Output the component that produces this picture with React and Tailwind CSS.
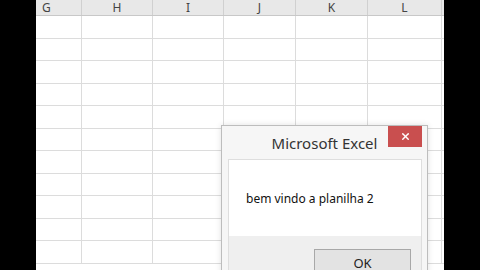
import { X } from 'lucide-react'

// column widths measured from the sheet header
const columns = [
  { name: 'G', width: 'w-[46px]', align: 'justify-start pl-[6px]' },
  { name: 'H', width: 'w-[71px]', align: 'justify-center' },
  { name: 'I', width: 'w-[71px]', align: 'justify-center' },
  { name: 'J', width: 'w-[72px]', align: 'justify-center' },
  { name: 'K', width: 'w-[72px]', align: 'justify-center' },
  { name: 'L', width: 'w-[74px]', align: 'justify-center' },
]

const rows = Array.from({ length: 11 }, (_, i) => i)

function Sheet() {
  return (
    <div className="flex flex-col w-[408px] h-full bg-white overflow-hidden">
      {/* column header */}
      <div className="flex h-[16px] bg-[#e8e8e8] border-b border-[#c8c8c8] shrink-0">
        {columns.map(c => (
          <div
            key={c.name}
            className={`${c.width} ${c.align} flex items-center shrink-0 border-r border-[#d0d0d0] text-[12px] leading-[15px] text-[#444]`}
          >
            {c.name}
          </div>
        ))}
      </div>

      {/* empty cells */}
      {rows.map(r => (
        <div key={r} className="flex h-[22.5px] shrink-0 border-b border-[#dcdcdc]">
          {columns.map(c => (
            <div key={c.name} className={`${c.width} shrink-0 border-r border-[#dcdcdc]`} />
          ))}
        </div>
      ))}
    </div>
  )
}

function MessageBox() {
  return (
    <div className="absolute left-[221px] top-[125px] w-[207px] h-[160px] bg-[#f6f6f6] border border-[#bdbdbd] shadow-[0_0_6px_rgba(0,0,0,0.12)] flex flex-col">
      {/* title bar */}
      <div className="relative h-[33px] flex items-center justify-center shrink-0">
        <span className="text-[15px] text-[#333] pt-[2px]">Microsoft Excel</span>
        <div className="absolute right-[5px] top-0 w-[34px] h-[21px] bg-[#c94f4f] flex items-center justify-center">
          <X size={11} strokeWidth={3} className="text-white" />
        </div>
      </div>

      {/* body */}
      <div className="flex flex-col ml-[6px] mr-[5px] border border-[#dedede] flex-1">
        <div className="h-[76px] bg-white flex items-center pl-[17px] shrink-0">
          <span className="text-[12px] text-[#111] pt-[2px]">bem vindo a planilha 2</span>
        </div>
        <div className="flex-1 bg-[#efefef] flex justify-end pr-[10px] pt-[13px]">
          <div className="w-[97px] h-[26px] bg-[#e3e3e3] border border-[#a8a8a8] flex items-center justify-center text-[13px] text-[#222] pt-[3px]">
            OK
          </div>
        </div>
      </div>
    </div>
  )
}

export default function App() {
  return (
    <div
      className="relative w-[480px] h-[270px] bg-black flex overflow-hidden"
      style={{ fontFamily: '"Noto Sans", "Open Sans", sans-serif' }}
    >
      <div className="w-[36px] shrink-0" />
      <Sheet />
      <MessageBox />
    </div>
  )
}
